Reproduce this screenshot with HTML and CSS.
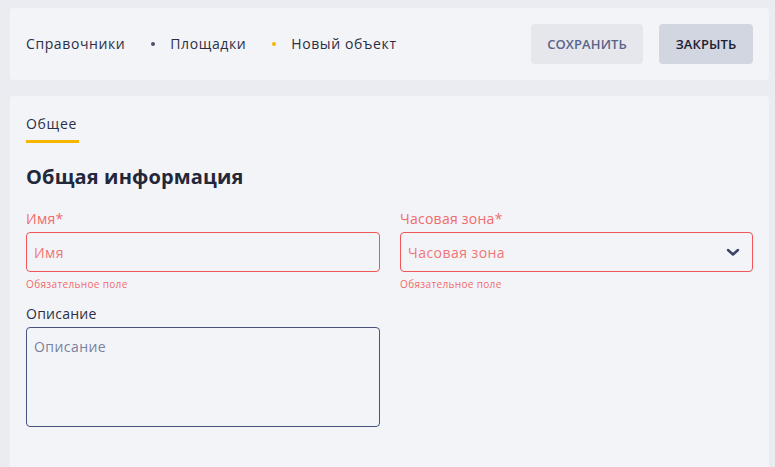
FILE: index.html
```html
<!DOCTYPE html>
<html lang="ru">
<head>
<meta charset="utf-8">
<link rel="stylesheet" href="styles.css">
</head>
<body>
<div class="page">
  <header class="topbar">
    <nav class="crumbs">
      <span class="crumb">Справочники</span>
      <span class="dot"></span>
      <span class="crumb">Площадки</span>
      <span class="dot dot-active"></span>
      <span class="crumb">Новый объект</span>
    </nav>
    <div class="actions">
      <button class="btn btn-save">СОХРАНИТЬ</button>
      <button class="btn btn-close">ЗАКРЫТЬ</button>
    </div>
  </header>
  <main class="card">
    <div class="tabs">
      <div class="tab tab-active">Общее</div>
    </div>
    <h2 class="section-title">Общая информация</h2>
    <div class="grid">
      <div class="field">
        <label class="label label-error">Имя*</label>
        <div class="input input-error"><span class="ph ph-error">Имя</span></div>
        <div class="hint">Обязательное поле</div>
      </div>
      <div class="field">
        <label class="label label-error">Часовая зона*</label>
        <div class="input input-error select">
          <span class="ph ph-error">Часовая зона</span>
          <svg class="chev" width="14" height="9" viewBox="0 0 14 9"><path d="M2 2 L7 6.5 L12 2" fill="none" stroke="#3b4264" stroke-width="2.4" stroke-linecap="round" stroke-linejoin="round"/></svg>
        </div>
        <div class="hint">Обязательное поле</div>
      </div>
      <div class="field">
        <label class="label">Описание</label>
        <div class="textarea"><span class="ph">Описание</span></div>
      </div>
    </div>
  </main>
</div>
</body>
</html>
```

FILE: styles.css
```css
* { box-sizing: border-box; }
html, body { margin: 0; padding: 0; }
body {
  background: #ebecf1;
  font-family: "Open Sans", "Noto Sans", "Liberation Sans", sans-serif;
  color: #2b2f45;
  width: 775px;
  height: 467px;
  overflow: hidden;
}
.page {
  padding: 8px 6px 0 10px;
  display: flex;
  flex-direction: column;
  gap: 16px;
}
.topbar {
  height: 72px;
  background: #f3f4f8;
  border-radius: 4px;
  padding: 0 16px;
  display: flex;
  align-items: center;
  justify-content: space-between;
}
.crumbs {
  display: flex;
  align-items: center;
  font-size: 14px;
  color: #2b2f45;
  margin-top: -1px;
}
.crumb { letter-spacing: 0.6px; }
.dot {
  width: 4px;
  height: 4px;
  border-radius: 50%;
  background: #4a5070;
  margin: 0 15px 0 26px;
}
.dot-active { background: #f7b500; }
.actions { display: flex; gap: 16px; }
.btn {
  height: 40px;
  border: none;
  border-radius: 4px;
  font-family: inherit;
  font-size: 13px;
  font-weight: 600;
  letter-spacing: 0.1px;
  padding: 0;
}
.btn-save { width: 112px; background: #e5e7ec; color: #5a6489; }
.btn-close { width: 94px; background: #d2d6e0; color: #1c2033; }
.card {
  background: #f3f4f8;
  border-radius: 4px 4px 0 0;
  padding: 18px 16px 40px 16px;
  height: 380px;
}
.tabs { display: flex; }
.tab {
  font-size: 14px;
  line-height: 20px;
  color: #2b2f45;
  letter-spacing: 0.7px;
  padding-bottom: 6px;
  border-bottom: 3px solid #f7b500;
  width: 53px;
}
.section-title {
  margin: 22px 0 20px 0;
  font-size: 20px;
  line-height: 24px;
  font-weight: 700;
  letter-spacing: 0.15px;
  color: #23273a;
}
.grid {
  display: grid;
  grid-template-columns: 354px 353px;
  column-gap: 20px;
  row-gap: 13px;
}
.field { display: flex; flex-direction: column; }
.label {
  font-size: 14px;
  line-height: 20px;
  color: #2b2f45;
  letter-spacing: 0.25px;
  margin-bottom: 3px;
}
.label-error { color: #f06b6b; }
.input {
  height: 40px;
  border: 1px solid #4a5280;
  border-radius: 4px;
  padding: 0 8px 0 7px;
  display: flex;
  align-items: center;
  justify-content: space-between;
}
.input-error { border-color: #f05656; }
.ph { font-size: 14px; color: #7a819c; letter-spacing: 0.45px; }
.ph-error { color: #f07676; }
.chev { margin-right: 4px; }
.hint {
  margin-top: 5px;
  font-size: 10px;
  line-height: 14px;
  letter-spacing: 0.35px;
  color: #f06b6b;
}
.textarea {
  height: 100px;
  border: 1px solid #4a5280;
  border-radius: 4px;
  padding: 7px 8px 7px 7px;
}
```
